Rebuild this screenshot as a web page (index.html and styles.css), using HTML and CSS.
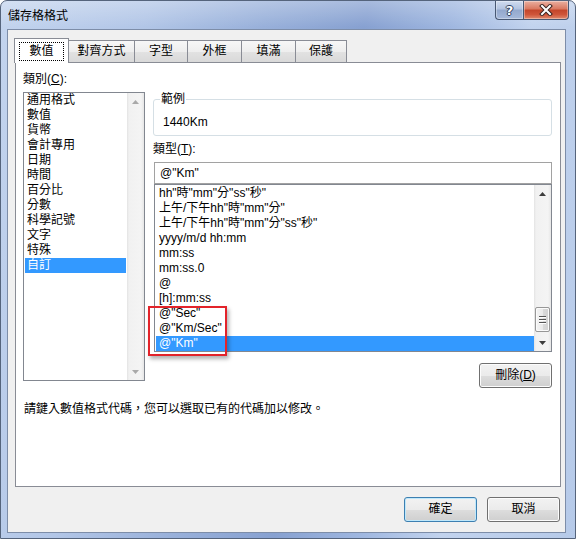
FILE: index.html
```html
<!DOCTYPE html>
<html lang="zh-Hant">
<head>
<meta charset="utf-8">
<title>儲存格格式</title>
<link rel="stylesheet" href="styles.css">
</head>
<body>
<div class="window">
  <div class="titlebar">
    <span class="title">儲存格格式</span>
    <div class="caption">
      <div class="cbtn help"><span class="qmark">?</span></div>
      <div class="cbtn close">
        <svg width="14" height="12" viewBox="0 0 14 12"><path d="M3 2 L11 10 M11 2 L3 10" stroke="#3a2421" stroke-width="4" stroke-linecap="square" fill="none"/><path d="M3 2 L11 10 M11 2 L3 10" stroke="#fff" stroke-width="2" stroke-linecap="square" fill="none"/></svg>
      </div>
    </div>
  </div>
  <div class="client">
    <div class="tabs">
      <div class="tab active w1"><span class="focus">數值</span></div>
      <div class="tab w2">對齊方式</div>
      <div class="tab w3">字型</div>
      <div class="tab w4">外框</div>
      <div class="tab w5">填滿</div>
      <div class="tab w6">保護</div>
    </div>
    <div class="panel">
      <div class="cols">
        <div class="left">
          <div class="lbl">類別(<u>C</u>):</div>
          <div class="listbox cat">
            <ul class="items">
              <li>通用格式</li>
              <li>數值</li>
              <li>貨幣</li>
              <li>會計專用</li>
              <li>日期</li>
              <li>時間</li>
              <li>百分比</li>
              <li>分數</li>
              <li>科學記號</li>
              <li>文字</li>
              <li>特殊</li>
              <li class="sel">自訂</li>
            </ul>
            <div class="vscroll disabled">
              <div class="arrow"><svg width="7" height="4" viewBox="0 0 7 4"><path d="M0 4H7L3.5 0Z"/></svg></div>
              <div class="spacer"></div>
              <div class="arrow"><svg width="7" height="4" viewBox="0 0 7 4"><path d="M0 0H7L3.5 4Z"/></svg></div>
            </div>
          </div>
        </div>
        <div class="right">
          <fieldset class="sample">
            <legend>範例</legend>
            <div class="sample-val">1440Km</div>
          </fieldset>
          <div class="lbl lbl-type">類型(<u>T</u>):</div>
          <div class="input">@"Km"</div>
          <div class="listbox fmt">
            <ul class="items">
              <li>hh"時"mm"分"ss"秒"</li>
              <li>上午/下午hh"時"mm"分"</li>
              <li>上午/下午hh"時"mm"分"ss"秒"</li>
              <li>yyyy/m/d hh:mm</li>
              <li>mm:ss</li>
              <li>mm:ss.0</li>
              <li>@</li>
              <li>[h]:mm:ss</li>
              <li>@"Sec"</li>
              <li>@"Km/Sec"</li>
              <li class="sel">@"Km"</li>
            </ul>
            <div class="vscroll">
              <div class="arrow"><svg width="7" height="4" viewBox="0 0 7 4"><path d="M0 4H7L3.5 0Z"/></svg></div>
              <div class="spacer"></div>
              <div class="thumb">
                <svg width="7" height="8" viewBox="0 0 7 8"><path d="M0 0.5H7M0 3.5H7M0 6.5H7" stroke="#555" stroke-width="1"/><path d="M0 1.5H7M0 4.5H7M0 7.5H7" stroke="#fff" stroke-width="1"/></svg>
              </div>
              <div class="tail"></div>
              <div class="arrow"><svg width="7" height="4" viewBox="0 0 7 4"><path d="M0 0H7L3.5 4Z"/></svg></div>
            </div>
            <div class="mark"></div>
          </div>
          <div class="btnrow">
            <div class="btn">刪除(<u>D</u>)</div>
          </div>
        </div>
      </div>
      <div class="hint">請鍵入數值格式代碼，您可以選取已有的代碼加以修改。</div>
    </div>
    <div class="footer">
      <div class="btn default">確定</div>
      <div class="btn">取消</div>
    </div>
  </div>
</div>
</body>
</html>
```
FILE: styles.css
```css
html, body {
  margin: 0;
  padding: 0;
}
body {
  width: 576px;
  height: 539px;
  overflow: hidden;
  font-family: "Liberation Sans", "Noto Sans CJK TC", sans-serif;
  font-size: 12px;
  color: #000;
  background: #fff;
}
.window {
  box-sizing: border-box;
  width: 576px;
  height: 539px;
  border: 1px solid #55647c;
  border-radius: 7px 7px 0 0;
  background:
    linear-gradient(180deg, rgba(255,255,255,0.28) 0, rgba(255,255,255,0) 26px),
    linear-gradient(100deg, #c3d4ee 0%, #b2c6e7 22%, #98b0da 40%, #87a1d1 55%, #9fb7e0 68%, #c2d3ee 80%, #b6cae9 100%);
  display: flex;
  flex-direction: column;
}
.titlebar {
  height: 28px;
  display: flex;
  align-items: flex-start;
}
.title {
  margin: 7px 0 0 7px;
  line-height: 14px;
  font-size: 12px;
  font-family: "Noto Sans CJK TC", sans-serif;
}
.caption {
  margin-left: auto;
  margin-right: 6px;
  display: flex;
}
.cbtn {
  box-sizing: border-box;
  height: 19px;
  border: 1px solid #485873;
  border-top: none;
  display: flex;
  align-items: center;
  justify-content: center;
  box-shadow: inset 0 0 0 1px rgba(255,255,255,0.35);
}
.help {
  width: 28px;
  border-right: none;
  border-radius: 0 0 0 4px;
  background: linear-gradient(180deg, #d0dcef 0%, #b2c3e0 45%, #93a8cd 50%, #a6b9da 100%);
}
.close {
  width: 46px;
  border-radius: 0 0 4px 0;
  background: linear-gradient(180deg, #eab0a1 0%, #d9775f 45%, #c3452a 50%, #cf5539 75%, #e08a6e 100%);
}
.qmark {
  color: #fff;
  font-weight: bold;
  font-size: 13px;
  line-height: 13px;
  font-family: "DejaVu Sans", sans-serif;
  text-shadow: 1px 0 #2f3f5e, -1px 0 #2f3f5e, 0 1px #2f3f5e, 0 -1px #2f3f5e;
}
.close svg {
  display: block;
}
.client {
  box-sizing: border-box;
  margin: 0 9px 0 6px;
  height: 504px;
  border: 1px solid #7d8da8;
  background: #f0f0f0;
  padding: 8px 4px 0 7px;
  display: flex;
  flex-direction: column;
}
.tabs {
  display: flex;
  align-items: flex-end;
  height: 24px;
  position: relative;
  z-index: 1;
}
.tab {
  box-sizing: border-box;
  height: 22px;
  border: 1px solid #898c95;
  border-bottom: none;
  border-left: none;
  background: linear-gradient(180deg, #f7f7f7 0%, #eeeeee 50%, #e2e2e2 51%, #d9d9d9 100%);
  display: flex;
  align-items: center;
  justify-content: center;
  line-height: 15px;
}
.tab.active {
  height: 25px;
  margin-bottom: -1px;
  margin-left: -1px;
  border-left: 1px solid #898c95;
  background: #fff;
}
.w1 { width: 55px; }
.w2 { width: 66px; }
.w3 { width: 53px; }
.w4 { width: 54px; }
.w5 { width: 54px; }
.w6 { width: 51px; }
.tab.w2 { border-left: none; }
.focus {
  box-sizing: border-box;
  width: 45px;
  height: 19px;
  border: 1px dotted #000;
  display: flex;
  align-items: center;
  justify-content: center;
}
.panel {
  box-sizing: border-box;
  width: 546px;
  height: 425px;
  border: 1px solid #898c95;
  background: #fff;
  padding: 9px 8px 0 7px;
}
.cols {
  display: flex;
  gap: 8px;
}
.left {
  width: 122px;
  display: flex;
  flex-direction: column;
}
.right {
  width: 399px;
  display: flex;
  flex-direction: column;
}
.lbl {
  line-height: 15px;
  height: 15px;
}
.listbox {
  box-sizing: border-box;
  border: 1px solid #828790;
  background: #fff;
  display: flex;
}
.cat {
  margin-top: 5px;
  height: 289px;
}
.items {
  flex: 1;
  list-style: none;
  margin: 0;
  padding: 0;
  min-width: 0;
}
.items li {
  height: 15px;
  line-height: 15px;
  white-space: nowrap;
}
.cat .items li {
  margin: 0 1px;
  padding-left: 2px;
}
.fmt .items {
  padding-top: 1px;
}
.fmt .items li {
  margin-left: 1px;
  padding-left: 3px;
}
.items li.sel {
  background: #3399ff;
  color: #fff;
}
.vscroll {
  width: 17px;
  display: flex;
  flex-direction: column;
  background: linear-gradient(90deg, #e3e3e3 0, #f1f1f1 2px, #f4f4f4 14px, #e6e6e6 17px);
}
.arrow {
  height: 17px;
  display: flex;
  align-items: center;
  justify-content: center;
}
.arrow svg {
  display: block;
  fill: #3d3d3d;
}
.disabled .arrow svg {
  fill: #a9a9a9;
}
.spacer {
  flex: 1;
}
.thumb {
  box-sizing: border-box;
  height: 25px;
  margin: 0 1px;
  border: 1px solid #979797;
  border-radius: 2px;
  background: linear-gradient(90deg, #f4f4f4 0%, #eaeaea 50%, #dadada 51%, #d2d2d2 100%);
  box-shadow: inset 0 0 0 1px #fbfbfb;
  display: flex;
  align-items: center;
  justify-content: center;
}
.thumb svg {
  display: block;
}
.tail {
  height: 2px;
}
.sample {
  margin: 20px 0 0 0;
  padding: 0 0 5px 6px;
  min-width: 0;
  border: 1px solid #d5dfe5;
  border-radius: 3px;
}
.sample legend {
  padding: 0 1px;
  line-height: 15px;
  font-size: 12px;
}
.sample-val {
  margin: 8px 0 0 3px;
  line-height: 15px;
}
.lbl-type {
  margin-top: 6px;
}
.input {
  box-sizing: border-box;
  margin: 5px 0 0 1px;
  height: 22px;
  border: 1px solid #a2a2a2;
  padding-left: 5px;
  line-height: 20px;
  background: #fff;
}
.fmt {
  position: relative;
  margin-left: 1px;
  height: 168px;
}
.mark {
  position: absolute;
  left: -7px;
  top: 121px;
  width: 79px;
  height: 50px;
  box-sizing: border-box;
  border: 2px solid #e3232a;
  box-shadow: 2px 3px 4px rgba(0, 0, 0, 0.3);
  pointer-events: none;
}
.btnrow {
  margin-top: 11px;
  display: flex;
  justify-content: flex-end;
}
.btn {
  box-sizing: border-box;
  width: 73px;
  height: 25px;
  border: 1px solid #707070;
  border-radius: 3px;
  background: linear-gradient(180deg, #f2f2f2 0%, #ebebeb 50%, #dddddd 51%, #cfcfcf 100%);
  box-shadow: inset 0 0 0 1px #fcfcfc;
  display: flex;
  align-items: center;
  justify-content: center;
  line-height: 15px;
}
.btn.default {
  border-color: #3c7fb1;
  box-shadow: inset 0 0 0 1px #bfe8fb;
}
.hint {
  margin-top: 14px;
  padding-left: 1px;
  line-height: 15px;
}
.footer {
  display: flex;
  justify-content: flex-end;
  gap: 10px;
  margin-top: 10px;
  padding-right: 1px;
}
```
